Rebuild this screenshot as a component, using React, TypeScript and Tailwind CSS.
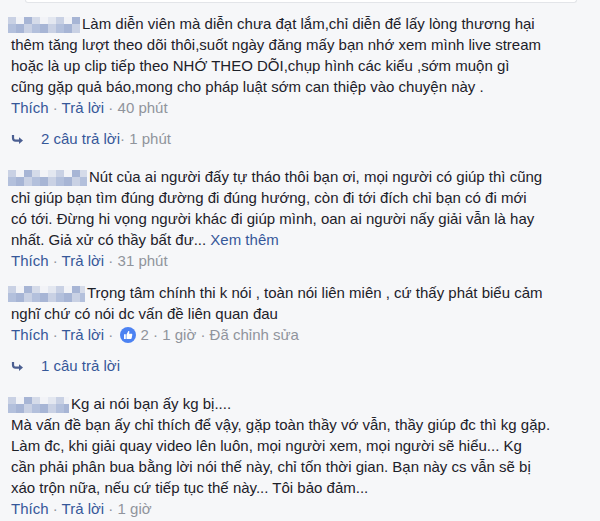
import React from "react";

type Comment = {
  nameW: number;
  lines: React.ReactNode[];
  meta: React.ReactNode;
  reply?: { text: string; time?: string };
};

const Dot = () => <span className="text-[#90949c]"> · </span>;

// pixelated name, blurred out in the screenshot
const BlurName = ({ width }: { width: number }) => {
  const cols = Math.ceil(width / 8);
  const shades = ["#c9d1e4", "#e3e7f0", "#b3c0dc", "#d5dbe9", "#a7b5d5", "#eceff5"];
  return (
    <span
      className="inline-block h-[16px] overflow-hidden align-[-4px] ml-[-3px] mr-[2px]"
      style={{ width }}
    >
      <span className="flex h-[7px]">
        {Array.from({ length: cols }).map((_, i) => (
          <span
            key={i}
            className="w-[8px] h-full shrink-0"
            style={{ background: i % 3 === 1 ? "#f2f3f7" : shades[(i * 5) % shades.length] }}
          />
        ))}
      </span>
      <span className="flex h-[9px]">
        {Array.from({ length: cols }).map((_, i) => (
          <span
            key={i}
            className="w-[8px] h-full shrink-0"
            style={{ background: shades[(i * 2 + 2) % shades.length] }}
          />
        ))}
      </span>
    </span>
  );
};

const LikeBadge = () => (
  <svg width="16" height="16" viewBox="0 0 16 16" className="inline-block align-[-3px] ml-[2px] mr-[5px]">
    <circle cx="8" cy="8" r="8" fill="#4c82f2" />
    <path
      d="M4 7.3h1.8v4.6H4z M6.5 7.4 L8.2 4.3 c0.3-0.6 1.3-0.4 1.2 0.3 L9.1 6.7 h2.3 c0.6 0 1 0.5 0.9 1.1 l-0.6 3.2 c-0.1 0.5-0.5 0.9-1 0.9 H6.5z"
      fill="white"
    />
  </svg>
);

const ReplyArrow = () => (
  <svg width="13" height="11" viewBox="0 0 13 11" className="shrink-0">
    <path
      d="M2 1 v3 c0 1.6 1.1 2.6 2.6 2.6 H9.5"
      fill="none"
      stroke="#4b5f92"
      strokeWidth="2.2"
    />
    <path d="M8 3.2 L12 6.6 L8 10 z" fill="#4b5f92" />
  </svg>
);

const Actions = ({ children }: { children?: React.ReactNode }) => (
  <div className="text-[15px] leading-[21px] h-[21px] whitespace-nowrap">
    <span className="text-[#365899]">Thích</span>
    <Dot />
    <span className="text-[#365899]">Trả lời</span>
    <Dot />
    <span className="text-[#90949c]">{children}</span>
  </div>
);

const comments: Comment[] = [
  {
    nameW: 72,
    lines: [
      "Làm diễn viên mà diễn chưa đạt lắm,chỉ diễn để lấy lòng thương hại",
      "thêm tăng lượt theo dõi thôi,suốt ngày đăng mấy bạn nhớ xem mình live stream",
      "hoặc là up clip tiếp theo NHỚ THEO DÕI,chụp hình các kiểu ,sớm muộn gì",
      "cũng gặp quả báo,mong cho pháp luật sớm can thiệp vào chuyện này .",
    ],
    meta: "40 phút",
    reply: { text: "2 câu trả lời", time: "1 phút" },
  },
  {
    nameW: 79,
    lines: [
      "Nút của ai người đấy tự tháo thôi bạn ơi, mọi người có giúp thì cũng",
      "chỉ giúp bạn tìm đúng đường đi đúng hướng, còn đi tới đích chỉ bạn có đi mới",
      "có tới. Đừng hi vọng người khác đi giúp mình, oan ai người nấy giải vẫn là hay",
      <>
        nhất. Giả xử có thầy bất đư...{" "}
        <span className="text-[#365899]">Xem thêm</span>
      </>,
    ],
    meta: "31 phút",
  },
  {
    nameW: 77,
    lines: [
      "Trọng tâm chính thi k nói , toàn nói liên miên , cứ thấy phát biểu cảm",
      "nghĩ chứ có nói dc vấn đề liên quan đau",
    ],
    meta: (
      <>
        <LikeBadge />
        2<Dot />1 giờ<Dot />Đã chỉnh sửa
      </>
    ),
    reply: { text: "1 câu trả lời" },
  },
  {
    nameW: 61,
    lines: [
      "Kg ai nói bạn ấy kg bị....",
      "Mà vấn đề bạn ấy chỉ thích để vậy, gặp toàn thầy vớ vẫn, thầy giúp đc thì kg gặp.",
      "Làm đc, khi giải quay video lên luôn, mọi người xem, mọi người sẽ hiểu... Kg",
      "cần phải phân bua bằng lời nói thế này, chỉ tốn thời gian. Bạn này cs vẫn sẽ bị",
      "xáo trộn nữa, nếu cứ tiếp tục thế này... Tôi bảo đảm...",
    ],
    meta: "1 giờ",
  },
];

export default function App() {
  return (
    <div className="w-[600px] h-[521px] overflow-hidden bg-[#f6f7f9] font-['Liberation_Sans',Arial,sans-serif] text-[#1d2129]">
      <div className="ml-[25px] mr-[23px] h-[3px] bg-white border border-t-0 border-[#e3e5e9] rounded-b-[3px]" />
      <div className="px-[11px] pt-[10px] flex flex-col">
        {comments.map((c, i) => (
          <div key={i} className={i === 0 ? "" : i === 2 ? "mt-[11px]" : "mt-[16px]"}>
            <div className="text-[15px] leading-[21px]">
              {c.lines.map((l, j) => (
                <div key={j} className="whitespace-nowrap h-[21px]">
                  {j === 0 && <BlurName width={c.nameW} />}
                  {l}
                </div>
              ))}
            </div>
            <Actions>{c.meta}</Actions>
            {c.reply && (
              <div className="mt-[11px] flex items-center h-[21px] text-[15px] whitespace-nowrap">
                <span className="w-[30px] flex">
                  <ReplyArrow />
                </span>
                <span className="text-[#365899]">{c.reply.text}</span>
                {c.reply.time && (
                  <span className="text-[#90949c]">
                    <Dot />
                    {c.reply.time}
                  </span>
                )}
              </div>
            )}
          </div>
        ))}
      </div>
    </div>
  );
}
